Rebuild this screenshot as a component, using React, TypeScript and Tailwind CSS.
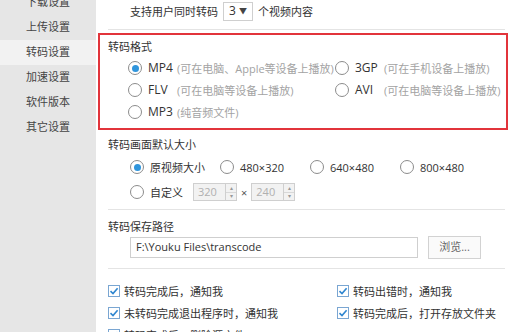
import React from 'react';

const FONT = { fontFamily: '"Segoe UI", "Open Sans", "Noto Sans CJK SC", sans-serif' };

const sideItems = ['下载设置', '上传设置', '转码设置', '加速设置', '软件版本', '其它设置'];

function Radio({ checked }: { checked?: boolean }) {
  return (
    <span className="w-[14px] h-[14px] rounded-full border border-[#8c8c8c] bg-white flex items-center justify-center shrink-0">
      {checked && <span className="w-[7px] h-[7px] rounded-full bg-[#2f95dc]" />}
    </span>
  );
}

function Checkbox() {
  return (
    <span className="w-[12px] h-[12px] border border-[#7aa6d2] bg-white flex items-center justify-center shrink-0">
      <svg width="10" height="10" viewBox="0 0 10 10">
        <path d="M1.5 5.2 L4 7.6 L8.6 2.2" fill="none" stroke="#2f86d0" strokeWidth="1.6" />
      </svg>
    </span>
  );
}

function Spin({ value }: { value: string }) {
  return (
    <span className="w-[44px] h-[18px] border border-[#cfcfcf] bg-[#f2f2f2] flex">
      <span className="flex-1 pl-[4px] text-[11px] leading-[16px] text-[#b0b0b0]">{value}</span>
      <span className="w-[11px] border-l border-[#cfcfcf] flex flex-col">
        <span className="flex-1 flex items-center justify-center text-[6px] leading-none text-[#999] border-b border-[#d8d8d8]">▴</span>
        <span className="flex-1 flex items-center justify-center text-[6px] leading-none text-[#999]">▾</span>
      </span>
    </span>
  );
}

function FormatOption({ label, hint, checked }: { label: string; hint: string; checked?: boolean }) {
  return (
    <div className="h-[16px] flex items-center leading-none">
      <Radio checked={checked} />
      <span className="ml-[6px] w-[29px] text-[12px] text-[#333]">{label}</span>
      <span className="text-[11px] text-[#a3a3a3]">{hint}</span>
    </div>
  );
}

function SizeOption({ label, checked }: { label: string; checked?: boolean }) {
  return (
    <div className="w-[90px] flex items-center leading-none">
      <Radio checked={checked} />
      <span className="ml-[6px] text-[11px] text-[#333]">{label}</span>
    </div>
  );
}

function CheckRow({ label }: { label: string }) {
  return (
    <div className="h-[14px] flex items-center leading-none">
      <Checkbox />
      <span className="ml-[4px] text-[11px] text-[#333] whitespace-nowrap">{label}</span>
    </div>
  );
}

export default function App() {
  return (
    <div className="w-[518px] h-[332px] overflow-hidden flex bg-white" style={FONT}>
      {/* Sidebar */}
      <div className="w-[96px] bg-[#e6e6e6] shrink-0">
        <div className="-mt-[10px]">
          {sideItems.map((t) => (
            <div
              key={t}
              className={`h-[25px] flex items-center justify-center text-[11px] text-[#444] ${
                t === '转码设置' ? 'bg-[#f2f2f2]' : ''
              }`}
            >
              {t}
            </div>
          ))}
        </div>
      </div>

      {/* Content */}
      <div className="flex-1 min-w-0">
        <div className="h-[22px] pl-[34px] flex items-center text-[11px] text-[#333] leading-none">
          <span>支持用户同时转码</span>
          <span className="ml-[5px] w-[30px] h-[19px] border border-[#cfcfcf] flex items-center justify-between px-[5px] text-[12px]">
            <span>3</span>
            <span className="text-[8px] text-[#444]">▼</span>
          </span>
          <span className="ml-[5px]">个视频内容</span>
        </div>
        <div className="ml-[12px] mr-[13px] mt-[7px] h-px bg-[#e4e4e4]" />

        {/* Highlighted format section */}
        <div className="ml-[2px] mr-[10px] mt-[3px] h-[97px] border-2 border-[#e2343b] pl-[8px] pt-[5px]">
          <div className="text-[11px] text-[#333] leading-[14px]">转码格式</div>
          <div className="pl-[20px] mt-[6px] flex flex-col gap-[6px]">
            <div className="flex">
              <div className="w-[207px]">
                <FormatOption label="MP4" hint="(可在电脑、Apple等设备上播放)" checked />
              </div>
              <FormatOption label="3GP" hint="(可在手机设备上播放)" />
            </div>
            <div className="flex">
              <div className="w-[207px]">
                <FormatOption label="FLV" hint="(可在电脑等设备上播放)" />
              </div>
              <FormatOption label="AVI" hint="(可在电脑等设备上播放)" />
            </div>
            <FormatOption label="MP3" hint="(纯音频文件)" />
          </div>
        </div>

        {/* Size section */}
        <div className="pl-[12px] mr-[13px] mt-[8px]">
          <div className="text-[11px] text-[#333] leading-[14px]">转码画面默认大小</div>
          <div className="pl-[22px] mt-[6px] flex flex-col gap-[7px]">
            <div className="h-[18px] flex items-center">
              <SizeOption label="原视频大小" checked />
              <SizeOption label="480×320" />
              <SizeOption label="640×480" />
              <SizeOption label="800×480" />
            </div>
            <div className="h-[18px] flex items-center leading-none">
              <Radio />
              <span className="ml-[6px] w-[43px] text-[11px] text-[#333]">自定义</span>
              <Spin value="320" />
              <span className="mx-[4px] text-[11px] text-[#555]">×</span>
              <Spin value="240" />
            </div>
          </div>
          <div className="mt-[8px] h-px bg-[#e4e4e4]" />
        </div>

        {/* Path section */}
        <div className="pl-[12px] mr-[13px] mt-[10px]">
          <div className="text-[11px] text-[#333] leading-[14px]">转码保存路径</div>
          <div className="pl-[22px] mt-[2px] h-[23px] flex items-center">
            <div className="w-[288px] h-[21px] border border-[#cfcfcf] flex items-center pl-[5px] text-[11px] text-[#333]">
              F:\Youku Files\transcode
            </div>
            <button className="ml-[10px] w-[53px] h-[23px] border border-[#d2d2d2] bg-[#fafafa] text-[11px] text-[#666]">
              浏览...
            </button>
          </div>
          <div className="mt-[9px] h-px bg-[#e4e4e4]" />
        </div>

        {/* Notify options */}
        <div className="pl-[12px] mt-[15px] grid grid-cols-[229px_1fr] gap-y-[8px]">
          <CheckRow label="转码完成后，通知我" />
          <CheckRow label="转码出错时，通知我" />
          <CheckRow label="未转码完成退出程序时，通知我" />
          <CheckRow label="转码完成后，打开存放文件夹" />
          <CheckRow label="转码完成后，删除源文件" />
        </div>
      </div>
    </div>
  );
}
